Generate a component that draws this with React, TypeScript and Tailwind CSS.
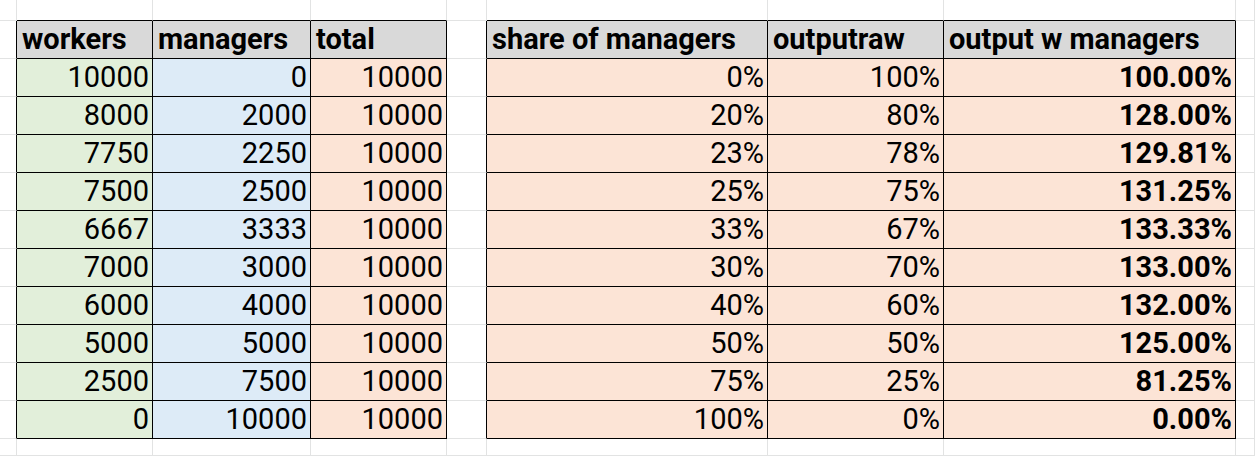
import React from "react";

const W = ["10000","8000","7750","7500","6667","7000","6000","5000","2500","0"];
const M = ["0","2000","2250","2500","3333","3000","4000","5000","7500","10000"];
const S = ["0%","20%","23%","25%","33%","30%","40%","50%","75%","100%"];
const R = ["100%","80%","78%","75%","67%","70%","60%","50%","25%","0%"];
const O = ["100.00%","128.00%","129.81%","131.25%","133.33%","133.00%","132.00%","125.00%","81.25%","0.00%"];

const COLS = 9;
const ROWS = 13;

function inTable(r: number, c: number) {
  if (r < 1 || r > 11) return false;
  return (c >= 1 && c <= 3) || (c >= 5 && c <= 7);
}

function cellContent(r: number, c: number): { text: string; bg: string; bold: boolean; right: boolean } | null {
  if (!inTable(r, c)) return null;
  if (r === 1) {
    const h: Record<number, string> = { 1: "workers", 2: "managers", 3: "total", 5: "share of managers", 6: "outputraw", 7: "output w managers" };
    return { text: h[c], bg: "bg-[#d9d9d9]", bold: true, right: false };
  }
  const i = r - 2;
  if (c === 1) return { text: W[i], bg: "bg-[#e2efda]", bold: false, right: true };
  if (c === 2) return { text: M[i], bg: "bg-[#ddebf7]", bold: false, right: true };
  if (c === 3) return { text: "10000", bg: "bg-[#fce4d6]", bold: false, right: true };
  if (c === 5) return { text: S[i], bg: "bg-[#fce4d6]", bold: false, right: true };
  if (c === 6) return { text: R[i], bg: "bg-[#fce4d6]", bold: false, right: true };
  return { text: O[i], bg: "bg-[#fce4d6]", bold: true, right: true };
}

export default function App() {
  const cells: React.ReactNode[] = [];
  for (let r = 0; r < ROWS; r++) {
    for (let c = 0; c < COLS; c++) {
      const content = cellContent(r, c);
      // right border black if this cell in table, or the next cell is in table
      const rightBlack = inTable(r, c) || inTable(r, c + 1);
      const bottomBlack = inTable(r, c) || inTable(r + 1, c);
      const cls = [
        "border-r border-b flex items-center overflow-hidden whitespace-nowrap",
        rightBlack ? "border-r-black" : "border-r-[#e2e3e3]",
        bottomBlack ? "border-b-black" : "border-b-[#e2e3e3]",
        content ? content.bg : "bg-white",
        content && content.right ? "justify-end pr-[3px]" : "justify-start pl-[5px]",
        content && content.bold ? "font-bold" : "font-normal",
      ].join(" ");
      cells.push(
        <div key={`${r}-${c}`} className={cls}>
          {content ? content.text : null}
        </div>
      );
    }
  }
  return (
    <div
      className="w-[1255px] h-[456px] overflow-hidden bg-white text-black text-[29px] leading-none grid grid-cols-[17px_136px_158px_136px_40px_281px_176px_292px_1fr] grid-rows-[21px_38px_38px_38px_38px_38px_38px_38px_38px_38px_38px_38px_1fr]"
      style={{ fontFamily: "Roboto, 'Liberation Sans', sans-serif" }}
    >
      {cells}
    </div>
  );
}
